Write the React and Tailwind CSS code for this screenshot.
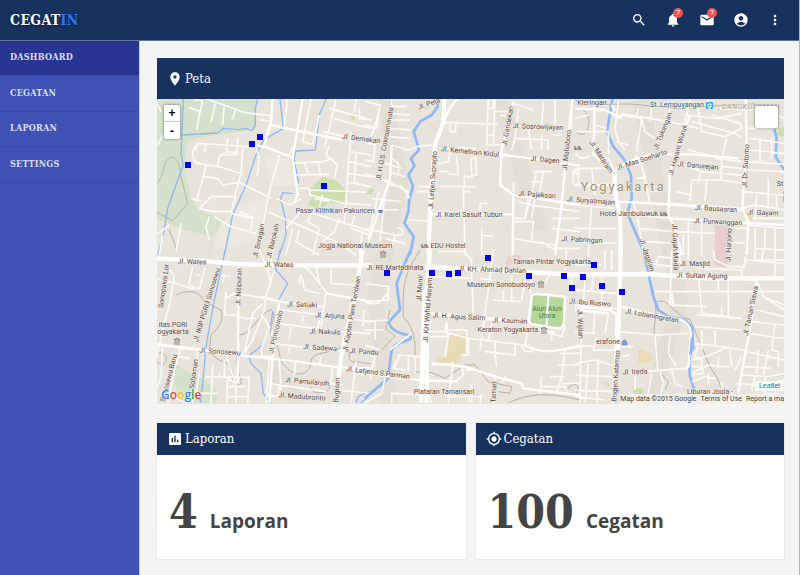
import {
  MdSearch,
  MdNotifications,
  MdEmail,
  MdAccountCircle,
  MdMoreVert,
  MdPlace,
  MdAssessment,
  MdMyLocation,
} from "react-icons/md";

const slab = "font-['DejaVu_Serif_Condensed','DejaVu_Serif',serif]";

const menu = ["DASHBOARD", "CEGATAN", "LAPORAN", "SETTINGS"];

// every tile is drawn at 3x, x/y is its origin on the map
const tiles = [
  {
    x: 156,
    y: 95,
    park: [
      ["M0 12H305L298 105L190 118L120 130L92 150L86 215L104 300L128 345L205 375L165 425L90 405L0 372Z", "#d6e1cb"],
      ["M500 245L540 258L570 285L565 325L515 325L495 345L455 330L470 305L460 285Z", "#cbdfaf"],
      ["M330 190L400 190L425 275L340 270ZM240 330L330 310L310 430L170 470L190 400Z", "#ece9e1"],
      ["M585 62L598 58L597 78L585 72ZM633 290L645 285V298L635 296Z", "#cbdfaf"],
    ],
    water: "M82 12L78 120L75 175L82 210L60 270L35 340L22 420L5 480M78 120L185 114L203 100L250 104L268 100L288 106L298 92V40L305 12M372 12L382 100L340 125L320 140L300 180L270 270L230 360L205 480M510 12L490 60L478 165L420 168L414 190L428 265M412 296L380 293L374 312L388 370L390 420L370 480",
    trail: "M0 268C25 250 20 190 45 187C75 185 70 240 80 265L95 325L50 378L0 350M40 405L50 430L62 465",
    minor: "M112 12L140 18L132 50L122 105M98 38L135 50M150 12L205 30L262 52L345 62M178 25L165 82M205 30L200 90M240 42L228 75M0 18L15 50M310 75L345 78M20 120L5 150M112 165L125 145L215 150L270 155L305 152M112 165C105 190 118 205 130 205L200 218L260 238M125 145L120 165M150 145L145 170M215 130L212 170L190 185L185 215M245 128L243 178L205 180M260 160L255 235L236 305L165 305L130 340M150 210L140 255L120 320M145 245L185 250L200 270L250 262L345 310M212 170L240 172M300 160L310 190L303 245M370 180L335 310L320 400M240 305L225 350L175 350L130 340M175 365L225 395L300 415M225 355L290 370L285 405M105 310L135 318M160 365L150 395L160 435M20 420L10 480M75 385L60 470M40 390L0 420M250 350L295 370M395 12L385 90M465 12L440 140L475 150M490 60L470 150M540 12L520 100L505 160M520 40L630 70M535 70L600 90L645 100M500 110L570 125M585 110L570 310L565 385M600 12L595 50M610 40V70L645 75M415 150L395 185M415 205L500 200L530 190M420 240L520 238M445 205L460 240M485 200L495 245M430 280L460 280L462 300L565 325L645 330M460 285L645 292M520 150L510 180L545 210L535 250M580 170L645 180M580 200L645 215M575 235L645 245M570 260L645 275M600 170L595 270M500 300L490 335M475 310L520 320M360 310L400 330L435 312M335 350L440 395L540 440L600 480M390 400L440 345L550 380L645 410M470 350L455 380L490 400L470 480M550 370L535 410L500 440M410 400L390 480M600 340L585 400L640 420M620 400L610 480M430 405L420 440L490 480",
    main: "M350 12L345 80L325 150M345 90L430 108L560 135M305 152L335 158L410 188M440 12L410 188L425 300L415 325",
    major: "",
  },
  {
    x: 365,
    y: 95,
    park: [
      ["M5 290L20 278L28 285L20 298H8Z", "#cbdfaf"],
    ],
    water: "M215 12L218 35L200 60L165 80L146 110L162 165L138 190L148 212L130 240L144 272L132 320L130 350L118 385L146 425L135 480",
    trail: "",
    minor: "M82 35H125M80 55L135 60M78 75H135M76 100L140 105M72 125L135 130M80 12V40M0 20L45 30L35 100L0 90M40 60L10 150M0 140L30 150L25 200L0 195M80 150L130 165L155 155L200 150M80 190L100 205V235M75 230L120 245M60 205L110 220M0 235L70 260L130 290L125 310M70 270L110 275L135 310M40 290L30 345L10 430M60 300L45 440M20 310L110 320M20 345H100M0 400L90 420M95 400C115 395 115 410 110 420L90 420L85 450M60 430L120 445M160 275L335 275M155 290H210M230 82L400 88M255 85V110H272V85M370 12L365 150H410M385 12V40H370M390 12L385 150M365 120H385M390 50H430M445 25L505 45M405 62H440M240 160H330L335 240L320 240L318 190H335M255 165L250 200L220 205M275 185L280 240L250 235M225 230H250M298 240V275M300 245H325M295 280L300 480M295 290H315M345 350V325H370M350 400V480M350 420L385 425M460 40L450 130L440 165M450 130L550 135L548 165M490 100L500 165M530 120V165M535 20L530 90M570 12V90M560 120H590M505 230H560M515 230L500 300L480 370M535 230L525 290M500 260H530M460 320L500 330L645 350M445 260V290M490 310L480 370H450M510 310L500 370M445 380H505L500 440L450 432M560 370H645M560 400L645 410M500 440L570 450L580 430M530 440L560 460H645M625 230L645 240M645 225H625V270M620 40V100M130 375L185 378M220 470H290",
    main: "M80 150L75 250L10 440M410 165L405 270L445 300L443 480M400 178L480 188L645 212M445 300L645 330M445 20L425 100L410 165M622 12L600 220L590 330L570 480M235 85C245 55 260 25 280 12M200 358H440",
    major: "M238 12L236 80L210 150L198 290L190 480",
  },
  {
    x: 575,
    y: 95,
    park: [
      ["M420 390L458 395L452 480H418Z", "#e8cdca"],
      ["M610 100L630 95V125L605 122Z", "#cbdfaf"],
      ["M512 350L535 352L532 378L515 372Z", "#eadcae"],
    ],
    water: "M112 12L96 110L115 155L145 190L168 240L170 310L157 355L185 420L210 480M595 90L605 130L602 185L628 225M628 290V320",
    trail: "M0 15C80 40 120 20 200 30L310 40L540 25M0 110C30 130 40 110 42 80C40 50 20 35 0 40",
    minor: "M0 70L40 60M0 110H50M60 90L95 100M60 110H100V180M70 180L100 190L120 230M130 20L120 100L130 140L150 165M130 60L200 70L185 170M140 55L280 80L370 100M200 70L210 110L240 130M190 40L185 65M230 40L225 80M285 40L275 95M0 175L20 190L45 185M0 220H100M10 220V270M50 220L60 300M0 330L120 340M0 400H125M0 440L125 445M50 330L40 480M125 140L160 150M180 180L200 210L225 325M170 210L205 205M185 250L215 245M225 290L270 285M170 360L290 370M175 320L190 380L205 480M190 400L290 410M210 440L300 445M345 12L335 60L325 90M330 60L430 70L500 55M370 40L380 110L450 125L500 100L495 85L410 60M350 80L480 115L500 130M400 12L395 40M435 40L510 45M520 45L560 40L628 70M515 100L600 100M525 130L628 145M555 130V200M590 130V190M520 165L628 175M520 200L628 208M300 200L380 230L500 240M340 165L440 190L438 255H350L345 320M375 235L370 265M395 260L390 320M305 290L345 300M420 190L500 200M440 215L500 220M440 255L500 265M285 325L500 340M500 290L628 300M545 300L540 370M580 250V340M605 300V345M500 340L540 330L628 345M530 370L628 370M520 390L628 400M540 400V460L628 465M570 400V460M300 410L420 415M340 375V480M380 380V480M325 420V480M460 400H515M460 440L510 445M600 400V480M628 230L520 225M455 130L440 190",
    main: "M60 12L55 180L120 230M0 40L90 45L140 70M120 45L110 30M120 230C140 200 190 190 230 178L350 178L490 190M345 60L300 180L285 230L280 360L300 400L320 480M125 320L280 328L500 345M280 370L420 378L628 390M512 12L515 140L502 340L520 380L515 480M0 270H110",
    major: "M118 235L122 310L135 350L137 480",
  },
  {
    x: 156,
    y: 250,
    park: [["M60 345L100 365L145 390L185 425L180 459H75L55 400Z", "#d6e1cb"]],
    water: "M208 0L175 150L150 290L140 400L133 459M372 0L360 60L395 100L368 150M350 185L345 220L320 285L278 318L285 340L315 370L322 430L345 459M600 459C605 430 620 435 645 425M615 459L645 432",
    trail: "M60 135C90 120 130 118 145 155L195 180C205 210 190 230 165 255L160 300C190 350 220 320 230 370C225 410 260 415 255 390L240 340L250 255C290 250 300 200 345 178C370 200 330 230 350 270C380 290 360 330 390 350C420 390 470 370 465 330C480 300 520 315 560 290C600 300 560 340 600 335L645 342M465 410C460 440 530 430 520 405M0 310C30 300 40 330 20 345L0 335",
    minor: "M30 40L55 80L40 165L20 240L0 330M0 85L60 100L115 118M110 50L98 105L130 118L148 50M120 75H135M205 70L200 100M195 78H225M210 125L205 195L240 195M210 145L235 130L300 140L370 155M235 195L265 205H300M310 0L335 60L345 95L330 140M320 160L290 190L265 310M350 0L340 60M355 60L330 140L325 180L290 270L265 310M430 45L460 60L510 125L495 230M440 85L445 120L490 130M435 75L430 100M480 50L490 100M525 60V100L600 105M370 155L500 170M380 180L500 195L645 215M365 220L550 245L645 250M350 240L345 260M405 230L400 270M440 195V215M345 280L550 305M400 290V310M490 210L485 240M340 325L335 400L330 459M320 200L340 230L315 300L320 320M0 285L125 300M75 290L55 360L35 459M20 290L15 380L0 420M75 295L120 300M70 320L100 325M125 305L110 400V459M130 370L120 430H185M170 345L165 459M150 380L280 382L275 459M245 160L248 310M210 315L240 405M215 410H270M215 385L212 459M240 410V459M215 440H275M205 330V380L240 400M335 400L370 405L365 440L335 435M370 330L375 420M420 330L415 375M495 320L490 345M370 405L510 425M530 350L525 400L560 405M560 360L645 375M540 420L645 430M600 335L585 459M625 180L620 230M580 200L575 240M50 440L90 459M190 370V385",
    main: "M0 282L140 300L270 318L400 332L550 352L645 355M280 320L345 320M370 150L350 320L340 459M248 40L245 400M510 130L645 155M315 140L370 155M420 45L500 50",
    major: "M0 25L130 32L245 42L400 46H645M620 0L600 120L555 320L540 459",
  },
  {
    x: 365,
    y: 250,
    park: [
      ["M505 135L600 145L594 232L497 222Z", "#b5d79a"],
      ["M255 253H305V310L285 315V340L212 338L215 325L245 320Z", "#e8dcb5"],
      ["M430 15L445 35L430 50L420 40ZM445 15H470V45H445Z", "#ebd0cc"],
    ],
    water: "M137 0L115 50L95 100L105 180L72 215C75 245 110 250 135 258C150 275 90 270 80 300L72 360L70 385L0 445",
    trail: "M165 0C130 60 110 80 115 200C160 250 150 300 148 365L200 368L240 385L300 345L330 345L370 395L440 410L435 430L400 425M430 459C500 425 560 430 645 450M50 300L90 258L62 235L75 180M605 425C610 400 650 390 635 430",
    minor: "M0 100L70 110V150L0 155M70 130L40 160H0M0 215L70 210M0 240H55M30 210V270M0 285L45 300M95 315L175 320M95 330L85 355L120 360M105 315L90 350M130 320V365M150 320V370M0 310L30 320L15 390M75 300L140 250M60 385L50 430L0 459M190 80L320 85L325 190M290 0L320 30V85M385 0L375 80L345 300M345 85L380 90M385 150L470 155M415 155V120M440 80V150M480 90L470 150M500 80L495 130M195 190L380 210L490 215M200 210L190 245L235 245L310 265L480 285M245 215L250 260L240 320M195 260H250M245 215L240 240H305V310M190 280V330M380 220L370 270M310 265V315H290M390 270V310L395 350M360 305L450 315V280M470 285L480 305H500V295M600 225L590 260L500 230M490 225L480 290M560 240V275M520 240L570 245M600 300L590 380L575 430M585 310H645M580 345H645M555 380H600M530 380L525 430M530 410H600L610 430M590 400H645M605 0L600 60M200 345L265 340L260 370L250 459M290 345L295 375L270 395M320 400L310 459M340 360L300 360M390 380L385 459M420 380L410 400M80 430L190 435M80 430V459M190 430L200 459M240 440H350M350 430L345 459M320 435V459M540 100L560 60M620 80V130",
    main: "M70 50L130 60M0 370L160 390L280 395M200 340L300 350L360 370L410 385L470 400L475 415L645 435M480 285C540 320 590 295 645 290M500 135Q510 128 600 140L597 215Q595 235 580 236L500 222L490 215L500 135M195 190L490 215M550 138L545 225",
    major: "M180 50L645 75M195 0L185 120V459M178 120L175 250L168 459",
  },
  {
    x: 575,
    y: 250,
    park: [
      ["M418 0H458V45L440 52L415 40Z", "#e8cdca"],
      ["M190 300H210V308H230V335L190 340Z", "#e8dcb5"],
      ["M175 415H205V432H175Z", "#cbdfaf"],
      ["M92 395L105 400L100 412L90 408ZM612 368L628 364V378H614Z", "#ead7c5"],
    ],
    water: "M206 0L222 80L235 140L250 180L280 200L330 210L350 230L354 280L342 330L345 380L358 420",
    trail: "M245 155C280 140 300 200 345 208L380 290L405 350L430 390L445 435M240 160C250 200 230 240 240 260L248 360L280 395L270 420",
    minor: "M0 45H80M90 0V60M110 0V60M0 120L125 130M30 85L25 165M55 80L50 120M80 80V170M0 175H125M20 180L15 459M60 180L55 245M0 245L60 250M100 190L90 250M0 285L60 290M65 265L55 300H120M130 245L250 255L345 250M140 320L165 315M240 125H628M215 40L290 50M240 60L250 20L290 25M290 0L285 165L395 170M310 0L320 60M340 0V30M370 55L500 60V80M415 0L420 30L465 50H510M370 80L380 180V190L500 205M430 80V120M460 80V200M500 60L515 30L628 40M510 20V50M540 0V30H628M565 0L560 30M600 0V80M365 195L500 205M360 230L500 240M380 240V300M420 240V290M440 170V200M360 280L510 300M370 280L360 320L380 325L440 300L450 290M350 330L380 325V350L350 350M350 370L400 345L440 350M380 350L385 370L350 375M350 395L390 380L420 385M400 370V400M430 320V350H465M465 300L470 350M500 320L480 360M515 305L628 330M550 300L545 370M580 300L565 375M505 350L590 355M500 375L580 380L628 370M480 400L560 405L628 390M540 380L530 420M570 380V430L628 435M530 215L628 225M545 180L628 200M550 100L565 140L628 180M565 140L628 165M520 250L628 265M600 220L590 300L610 305V350M240 255L248 360M285 260L280 310L305 350M145 370L330 355L345 340M180 380V420M230 370L220 430M255 365L265 400L250 459M290 360L300 400L320 410M0 340L60 330L110 345M0 375L110 380M0 420L120 425M40 340L30 459M70 330L65 459M0 440L90 450M440 395V430M600 395V430M130 290L175 290",
    main: "M0 165L105 180L125 195L122 300L112 459M140 170L240 195L320 210Q345 220 348 250L340 350L330 359M500 85L545 90L525 240L505 340L485 459M290 130L295 170M0 180L100 190M520 90L535 80",
    major: "M0 73L215 72L300 78L400 85H628M137 0L132 200L128 300",
  },
];

// [text, x, y, rotation]
const labels = [
  ["Jl. Demakan", 361, 139, 7],
  ["Jl. H.O.S. Cokroaminoto", 385, 144, -80],
  ["Jl. Peta", 429, 104, -20],
  ["Jl. Letjen Suprapto", 433, 180, -86],
  ["Jl. Gandekan", 508, 126, -80],
  ["Jl. Sosrowijayan", 538, 127, 2],
  ["Jl. Kemetiran Kidul", 470, 152, 6],
  ["Jl. Dagen", 545, 160, 5],
  ["Jl. Malioboro", 567, 150, -84],
  ["Jl. Pajeksan", 537, 195, 4],
  ["Jl. Karel Sasuit Tubun", 469, 215, 0],
  ["EDU Hostel", 448, 246, 0],
  ["Jl. Pabringan", 582, 240, 3],
  ["Jl. Suryatmajan", 591, 201, 4],
  ["Kleringan", 592, 103, 0],
  ["Jl. Mataram", 601, 157, 57],
  ["Jl. Mas Soeharto", 642, 160, -18],
  ["Jl. Tukangan", 663, 131, -68],
  ["Jl. Hayam Wuruk", 678, 150, -74],
  ["Jl. Danurejan", 698, 166, 5],
  ["Jl. Dr. Sutomo", 746, 166, -87],
  ["Jl. Bausasran", 716, 209, 3],
  ["Jl. Gayam", 763, 213, 2],
  ["Jl. Purwanggan", 718, 222, 3],
  ["Hotel Jambuluwuk", 629, 214, 0],
  ["Jl. Gajah Mada", 675, 247, 88],
  ["Jl. Jagalan", 647, 255, 72],
  ["Jl. Harjono", 729, 245, -88],
  ["St", 780, 184, 0],
  ["Jogja National Museum", 355, 246, 0],
  ["Jl. Soragan", 259, 241, -78],
  ["Jl. Barokah", 273, 241, -76],
  ["Jl. Wates", 192, 262, 2],
  ["Jl. Wates", 279, 265, 1],
  ["Jl. RE Martadinata", 395, 268, 0],
  ["Sonopakis Lor", 164, 286, -82],
  ["Jl. IKIP PGRI I Sonosewu", 207, 305, -73],
  ["Jl. Nitipuran", 239, 287, -88],
  ["itas PGRI", 173, 325, 0],
  ["ogyakarta", 173, 332, 0],
  ["Jl. Setiaki", 302, 305, 2],
  ["Jl. Arjuna", 330, 316, 3],
  ["Jl. Nakulo", 325, 332, 2],
  ["Jl. Sadewa", 320, 348, 4],
  ["Jl. Poncowolo", 276, 332, -77],
  ["Jl. Kapten Piere Tendean", 352, 314, -80],
  ["Jl. Sonosewu", 220, 352, 4],
  ["Jl. Pandu", 364, 352, 4],
  ["Jl. Letjend S.Parman", 378, 373, 7],
  ["Jl. Pamularsih", 307, 382, 5],
  ["Jl. Madubronto", 302, 397, 4],
  ["Bugisan", 337, 390, -86],
  ["Soboman", 194, 374, -82],
  ["Sonosewu Baru", 169, 378, -75],
  ["Jl. KH. Ahmad Dahlan", 492, 270, 2],
  ["Jl. Munir", 420, 288, -87],
  ["Jl. KH Wahid Hasyim", 428, 310, -86],
  ["Museum Sonobudoyo", 501, 285, 0],
  ["Taman Pintar Yogyakarta", 552, 262, 0],
  ["Jl. H. Agus Salim", 459, 317, 3],
  ["Jl. Kauman", 510, 321, 2],
  ["Keraton Yogyakarta", 508, 330, 0],
  ["Plataran Tamansari", 444, 392, 0],
  ["Taman", 494, 392, -87],
  ["Jl. Masjid", 695, 264, 0],
  ["Jl. Sultan Agung", 702, 276, 1],
  ["Jl. Ibu Ruswo", 590, 303, 4],
  ["Jl. Wijilan", 580, 324, 88],
  ["Jl. Lobaningratan", 652, 316, 10],
  ["Jl. Taman Siswa", 751, 311, -78],
  ["erafone", 608, 342, 0],
  ["Jl. Ireda", 635, 372, -2],
  ["Brigjen Katamso", 616, 376, -86],
  ["Liburan Jogja -", 710, 392, 0],
];

const markers = [
  [260, 137], [252, 144], [188, 165], [324, 186], [387, 273], [432, 273],
  [449, 274], [458, 273], [488, 258], [529, 276], [564, 276], [572, 288],
  [583, 277], [594, 265], [602, 286], [622, 292],
];

// small museum / hotel symbols
function Museum({ x, y }) {
  return (
    <path
      d={`M${x - 3} ${y - 1}l3 -2l3 2zM${x - 2} ${y}v2M${x} ${y}v2M${x + 2} ${y}v2M${x - 3} ${y + 3}h6`}
      fill="none"
      stroke="#6b5a55"
      strokeWidth="0.7"
    />
  );
}

function Hotel({ x, y }) {
  return (
    <path d={`M${x - 3} ${y - 2}v4M${x - 3} ${y + 1}h6v1M${x - 1} ${y - 1}h3v2`} fill="none" stroke="#6b5a55" />
  );
}

function CityMap() {
  return (
    <svg viewBox="157 99 627 305" className="block w-full bg-[#e8e4db]" role="img" aria-label="Peta Yogyakarta">
      <rect x="157" y="99" width="627" height="305" fill="#e8e4db" />
      <g fill="none" stroke="#dedad0" strokeWidth="16" opacity="0.5">
        <path d="M385 99L400 180L375 300L390 404M250 340L300 404M640 99L680 300L650 404M500 99L540 230" />
      </g>
      {tiles.map((t) => (
        <g key={`${t.x}-${t.y}`} transform={`translate(${t.x} ${t.y}) scale(${1 / 3})`} fill="none" strokeLinejoin="round">
          {t.park.map(([d, fill]) => (
            <path key={d} d={d} fill={fill} />
          ))}
          <path d={t.trail} stroke="#b9b1a6" strokeWidth="3" />
          <path d={t.water} stroke="#8fb8f8" strokeWidth={t.x === 156 ? 4 : 8} />
          <path d={t.minor} stroke="#fbfaf8" strokeWidth="5" />
          <path d={t.main} stroke="#fff" strokeWidth="7" />
          <path d={t.major} stroke="#fff" strokeWidth="13" />
        </g>
      ))}
      <path d="M691 336L695 348L689 356Z" fill="#8fb8f8" />
      <g
        className="font-[Roboto,sans-serif] text-[7px]"
        textAnchor="middle"
        dominantBaseline="central"
        fill="#5d4a47"
        stroke="#f3f0ea"
        strokeWidth="1"
        paintOrder="stroke"
      >
        {labels.map(([text, x, y, r]) => (
          <text key={`${text}${x}`} x={x} y={y} transform={`rotate(${r} ${x} ${y})`}>
            {text}
          </text>
        ))}
        <text x="335" y="211" fill="#54517c">Pasar Klithikan Pakuncen</text>
        <text x="677" y="105" fill="#256a88">St. Lempuyangan</text>
        <text x="547" y="309" fill="#4f7f45" stroke="none">Alun Alun</text>
        <text x="547" y="316" fill="#4f7f45" stroke="none">Utara</text>
        <text x="751" y="107" fill="#a59c83" className="italic tracking-widest">DANUKUSUMAN</text>
        <text x="623" y="186" fill="#9e9678" className="text-[13px] tracking-[2px]">Yogyakarta</text>
      </g>
      <rect x="706" y="102" width="7" height="7" rx="1" fill="#2ab0ea" />
      <path d="M708 104h3v3h-3zM708 108h3" fill="none" stroke="#fff" />
      <path d="M378 210h5l-1 3h-3z" fill="#6b76c4" />
      <path d="M622 342h5v3h-5zM623 342c0 -3 3 -3 3 0" fill="#8c9fdd" stroke="#6b76c4" strokeWidth="0.6" />
      <Museum x={383} y={254} />
      <Museum x={541} y={284} />
      <Museum x={544} y={330} />
      <Museum x={177} y={341} />
      <Hotel x={425} y={246} />
      <Hotel x={664} y={214} />
      <Hotel x={578} y={148} />
      {markers.map(([x, y]) => (
        <rect key={`${x}-${y}`} x={x - 3} y={y - 3} width="6" height="6" fill="#0000ff" />
      ))}
    </svg>
  );
}

function PanelHead({ icon: Icon, title, tall }) {
  return (
    <h2 className={`flex items-center gap-[2px] bg-[#18325f] px-[10px] text-[13px] text-white ${tall ? "h-[41px]" : "h-8"}`}>
      <Icon size={16} />
      {title}
    </h2>
  );
}

function StatCard({ icon, title, value }) {
  return (
    <section className="min-w-0 bg-white shadow-[0_0_1px_#bbb]">
      <PanelHead icon={icon} title={title} />
      <p className="flex h-[104px] items-baseline gap-3 px-3 pt-[29px] font-bold text-[#444]">
        <span className="text-[46px] leading-[56px]">{value}</span>
        <span className="font-['Open_Sans',sans-serif] text-[19px]">{title}</span>
      </p>
    </section>
  );
}

function Badge({ children }) {
  return (
    <span className="absolute -top-1 -right-[2px] grid size-[10px] place-items-center rounded-full bg-[#ef5350] text-[8px] leading-none text-white">
      {children}
    </span>
  );
}

export default function App() {
  return (
    <div className={`flex min-h-screen flex-col border-r border-[#b5b5b5] bg-[#f4f4f4] ${slab}`}>
      <header className="flex h-[41px] items-center justify-between border-b border-[#5f7396] bg-[#18325f] pr-4 pl-[10px] text-white">
        <a href="#" className="text-[14px] font-bold tracking-wide [text-shadow:0_1px_2px_#0008]">
          CEGAT<span className="text-[#2979ff]">IN</span>
        </a>
        <nav className="flex items-center gap-[18px]">
          <button aria-label="Cari"><MdSearch size={16} /></button>
          <button aria-label="Notifikasi" className="relative">
            <MdNotifications size={16} />
            <Badge>7</Badge>
          </button>
          <button aria-label="Pesan" className="relative">
            <MdEmail size={16} />
            <Badge>7</Badge>
          </button>
          <button aria-label="Akun"><MdAccountCircle size={16} /></button>
          <button aria-label="Lainnya"><MdMoreVert size={16} /></button>
        </nav>
      </header>

      <div className="flex flex-1">
        <aside className="w-[140px] shrink-0 border-r border-[#c5cae9] bg-[#3f51b5]">
          {menu.map((item, i) => (
            <a
              key={item}
              href="#"
              className={`flex h-[35px] items-center border-b border-[#3949a8] px-[10px] text-[9px] font-bold tracking-wide text-[#dcdff2] even:h-9 ${
                i === 0 ? "bg-[#283593]" : ""
              }`}
            >
              {item}
            </a>
          ))}
        </aside>

        <main className="min-w-0 flex-1 pt-[17px] pr-[15px] pb-4 pl-[17px]">
          <section>
            <PanelHead icon={MdPlace} title="Peta" tall />
            <div className="relative overflow-hidden">
              <CityMap />
              <div className="absolute top-[6px] left-[7px] w-4 overflow-hidden rounded-xs bg-white font-['Liberation_Sans',sans-serif] text-[12px] font-bold text-black shadow-[0_0_3px_#0008]">
                <button className="block h-[17px] w-full border-b border-[#ccc] leading-4">+</button>
                <button className="block h-[17px] w-full leading-4">-</button>
              </div>
              <button
                aria-label="Layers"
                className="absolute top-[7px] right-[6px] h-[22px] w-[23px] rounded-xs bg-white shadow-[0_0_3px_#0008]"
              />
              <span className="absolute bottom-0 left-1 font-['Open_Sans',sans-serif] text-[12px] leading-[18px] font-semibold text-[#4285f4] [text-shadow:0_0_2px_#fff]">
                G<span className="text-[#ea4335]">o</span>
                <span className="text-[#fbbc05]">o</span>g
                <span className="text-[#34a853]">l</span>
                <span className="text-[#ea4335]">e</span>
              </span>
              <a
                href="#"
                className="absolute right-0 bottom-[13px] bg-white/70 px-1 font-['Liberation_Sans',sans-serif] text-[7px] leading-[10px] text-[#0078a8]"
              >
                Leaflet
              </a>
              <div className="absolute right-0 bottom-0 flex gap-1 bg-[#f5f3ee]/80 font-[Roboto,sans-serif] text-[7px] leading-[10px] whitespace-nowrap text-[#444]">
                <span>Map data ©2015 Google</span>
                <a href="#">Terms of Use</a>
                <a href="#">Report a ma</a>
              </div>
            </div>
          </section>

          <div className="mt-[19px] grid grid-cols-2 gap-[10px]">
            <StatCard icon={MdAssessment} title="Laporan" value="4" />
            <StatCard icon={MdMyLocation} title="Cegatan" value="100" />
          </div>
        </main>
      </div>
    </div>
  );
}
